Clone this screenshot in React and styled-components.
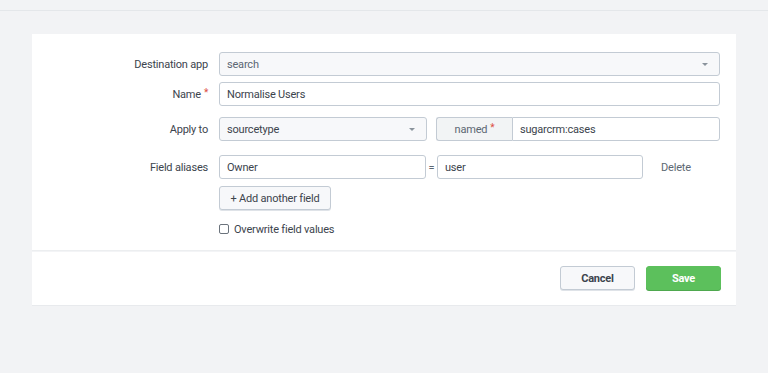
import React from "react";
import styled, { createGlobalStyle } from "styled-components";

const Global = createGlobalStyle`
  html, body { margin: 0; padding: 0; background: #f2f3f5; }
  body { font-family: Roboto, "Liberation Sans", sans-serif; font-size: 11px; color: #3c444d; letter-spacing: -0.2px; }
  * { box-sizing: border-box; }
`;

const Page = styled.div`
  min-height: 373px;
  background: #f2f3f5;
`;

const TopBar = styled.div`
  height: 11px;
  border-bottom: 1px solid #e4e7ea;
`;

const Card = styled.div`
  margin: 23px 32px 0 32px;
  background: #fff;
  box-shadow: 0 1px 0 #e8eaed;
`;

const Body = styled.div`
  padding: 18px 16px 14px 0;
`;

const Row = styled.div`
  display: grid;
  grid-template-columns: 176px 1fr;
  column-gap: 11px;
  align-items: center;
  margin-top: ${(p) => p.$mt || 0}px;
`;

const Label = styled.div`
  text-align: right;
  font-size: 11px;
  color: #3c444d;
  white-space: nowrap;
`;

const Req = styled.span`
  color: #dc4e41;
  margin-left: 3px;
  font-size: 10px;
  position: relative;
  top: -2px;
`;

const Controls = styled.div`
  display: flex;
  align-items: center;
  flex: ${(p) => (p.$grow ? 1 : "initial")};
  margin-left: ${(p) => p.$ml || 0}px;
`;

const Box = styled.div`
  height: 24px;
  width: ${(p) => (p.$w ? `${p.$w}px` : "auto")};
  flex: ${(p) => (p.$w ? "none" : "1")};
  display: flex;
  align-items: center;
  padding: 0 7px;
  border: 1px solid #c3cbd4;
  border-radius: ${(p) => p.$radius || "3px"};
  background: ${(p) => (p.$select ? "#f7f8fa" : "#fff")};
  color: ${(p) => (p.$muted ? "#5c6773" : "#3c444d")};
  font-size: 11px;
  position: relative;
`;

const Caret = styled.span`
  position: absolute;
  right: 11px;
  top: 10px;
  width: 0;
  height: 0;
  border-left: 3px solid transparent;
  border-right: 3px solid transparent;
  border-top: 3px solid #8a939c;
`;

const Addon = styled.div`
  height: 24px;
  width: 76px;
  flex: none;
  display: flex;
  align-items: center;
  justify-content: center;
  background: #f2f4f5;
  border: 1px solid #c3cbd4;
  border-right: none;
  border-radius: 3px 0 0 3px;
  color: #5c6773;
  font-size: 11px;
`;

const Equals = styled.span`
  width: 11px;
  text-align: center;
  color: #5c6773;
  font-size: 11px;
`;

const LinkText = styled.span`
  margin-left: 18px;
  color: #5c6773;
  font-size: 11px;
`;

const Button = styled.button`
  height: 24px;
  width: ${(p) => p.$w}px;
  font-family: inherit;
  letter-spacing: inherit;
  font-size: 11px;
  border-radius: 3px;
  cursor: pointer;
  border: 1px solid ${(p) => (p.$primary ? "#5cc05c" : "#c3cbd4")};
  background: ${(p) => (p.$primary ? "#5cc05c" : "#f7f8fa")};
  color: ${(p) => (p.$primary ? "#fff" : "#3c444d")};
  font-weight: ${(p) => (p.$bold ? 700 : 400)};
  box-shadow: 0 1px 0 ${(p) => (p.$primary ? "#4ea84e" : "#dfe3e8")};
  padding: 0;
`;

const CheckRow = styled.label`
  display: flex;
  align-items: center;
  gap: 5px;
  height: 14px;
  font-size: 11px;
  color: #3c444d;
`;

const CheckBox = styled.span`
  width: 10px;
  height: 10px;
  border: 1px solid #6b737c;
  border-radius: 2px;
  background: #fff;
`;

const Divider = styled.div`
  height: 1px;
  background: #eceef0;
  box-shadow: 0 1px 0 #f3f4f6;
`;

const Footer = styled.div`
  display: flex;
  justify-content: flex-end;
  gap: 11px;
  padding: 15px 15px 15px 0;
`;

export default function App() {
  return (
    <Page>
      <Global />
      <TopBar />
      <Card>
        <Body>
          <Row>
            <Label>Destination app</Label>
            <Controls>
              <Box $select $muted>
                search
                <Caret />
              </Box>
            </Controls>
          </Row>
          <Row $mt={6}>
            <Label>
              Name<Req>*</Req>
            </Label>
            <Controls>
              <Box>Normalise Users</Box>
            </Controls>
          </Row>
          <Row $mt={11}>
            <Label>Apply to</Label>
            <Controls>
              <Box $select $w={208}>
                sourcetype
                <Caret />
              </Box>
              <Controls $grow $ml={9}>
                <Addon>
                  named<Req>*</Req>
                </Addon>
                <Box $radius="0 3px 3px 0">sugarcrm:cases</Box>
              </Controls>
            </Controls>
          </Row>
          <Row $mt={14}>
            <Label>Field aliases</Label>
            <Controls>
              <Box $w={207}>Owner</Box>
              <Equals>=</Equals>
              <Box $w={206}>user</Box>
              <LinkText>Delete</LinkText>
            </Controls>
          </Row>
          <Row $mt={7}>
            <span />
            <Controls>
              <Button $w={112}>+ Add another field</Button>
            </Controls>
          </Row>
          <Row $mt={12}>
            <span />
            <CheckRow>
              <CheckBox />
              Overwrite field values
            </CheckRow>
          </Row>
        </Body>
        <Divider />
        <Footer>
          <Button $w={75} $bold>
            Cancel
          </Button>
          <Button $w={75} $primary $bold>
            Save
          </Button>
        </Footer>
      </Card>
    </Page>
  );
}
